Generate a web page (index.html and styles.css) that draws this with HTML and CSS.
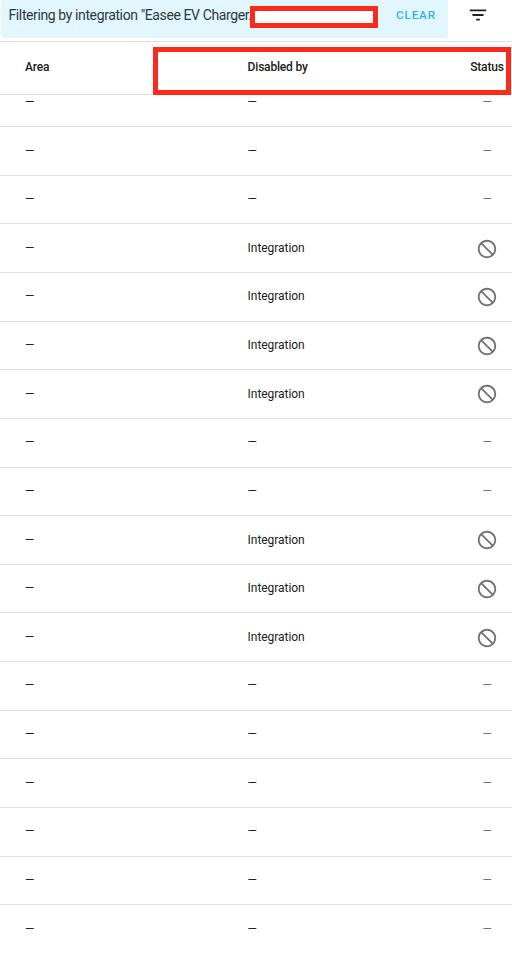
FILE: index.html
```html
<!DOCTYPE html>
<html lang="en">
<head>
<meta charset="utf-8">
<title>Entities</title>
<link rel="stylesheet" href="styles.css">
</head>
<body>
<svg class="defs" aria-hidden="true"><symbol id="cancel" viewBox="0 0 24 24"><path d="M12 2C17.5 2 22 6.5 22 12S17.5 22 12 22 2 17.5 2 12 6.5 2 12 2M12 4C10.1 4 8.4 4.6 7.1 5.7L18.3 16.9C19.3 15.5 20 13.8 20 12C20 7.6 16.4 4 12 4M16.9 18.3L5.7 7.1C4.6 8.4 4 10.1 4 12C4 16.4 7.6 20 12 20C13.9 20 15.6 19.4 16.9 18.3Z"/></symbol></svg>
<header class="toolbar">
  <div class="filter"><span class="filter-text">Filtering by integration "Easee EV Charger.</span><span class="redacted"></span><button class="clear">CLEAR</button></div>
  <svg class="filter-icon" viewBox="0 0 24 24"><path d="M6 13h12v-2H6M3 6v2h18V6M10 18h4v-2h-4v2z"/></svg>
</header>
<div class="row head"><span>Area</span><span>Disabled by</span><span class="status">Status</span><div class="highlight"></div></div>
<main class="body" id="body"></main>
<script src="rows.js"></script>
</body>
</html>
```
FILE: styles.css
```css
* { box-sizing: border-box; }
body { margin: 0; height: 953px; overflow: hidden; background: #fff; color: #212121; font-family: Roboto, sans-serif; font-size: 12px; }
.defs { position: absolute; width: 0; height: 0; }
.toolbar { display: flex; height: 42px; padding-left: 1px; border-bottom: 1px solid #e0e0e0; }
.filter { display: flex; width: 447px; height: 38px; padding-left: 7.5px; background: #e2f6fe; border-radius: 0 0 4px 4px; color: #2b3a42; }
.filter-text { width: 241.5px; padding-top: 5px; font-size: 14px; line-height: 21px; letter-spacing: -.39px; white-space: nowrap; }
.redacted { position: relative; width: 128px; height: 22px; margin-top: 6px; border: 5px solid #fd291b; background: #fff; }
.clear { height: 31px; margin-left: 18px; padding: 0; border: 0; background: none; color: #2cb1ef; font: 500 11.6px/31px Roboto, sans-serif; letter-spacing: .9px; }
.filter-icon { width: 22px; height: 22px; margin: 4px 0 0 19px; fill: #212121; }
.row { display: grid; grid-template-columns: 222.6px 208px 32px; align-items: center; height: 48.64px; padding: 0 0 1px 25px; border-bottom: 1px solid #e0e0e0; letter-spacing: -.05px; white-space: nowrap; }
.head { position: relative; height: 53px; padding-bottom: 3px; font-weight: 500; letter-spacing: -.18px; }
.head .status { margin-left: 14.6px; }
.highlight { position: absolute; left: 153px; top: 5px; width: 358px; height: 48px; border: 5px solid #fd291b; }
.body { height: 858px; overflow: hidden; }
.body .row:first-child { margin-top: -16.4px; }
.body .row:last-child { border-bottom: 0; padding-bottom: 2px; }
.body .status { width: 63.2px; text-align: center; color: #727272; line-height: 1; }
.body .status svg { display: block; width: 22px; height: 22px; margin: 1.5px auto 0; fill: #727272; }
```
FILE: rows.js
```js
const disabled = [false, false, false, true, true, true, true, false, false, true, true, true, false, false, false, false, false, false];
document.getElementById('body').innerHTML = disabled.map(d => `<div class="row"><span>—</span><span>${d ? 'Integration' : '—'}</span><span class="status">${d ? '<svg><use href="#cancel"/></svg>' : '—'}</span></div>`).join('');
```
